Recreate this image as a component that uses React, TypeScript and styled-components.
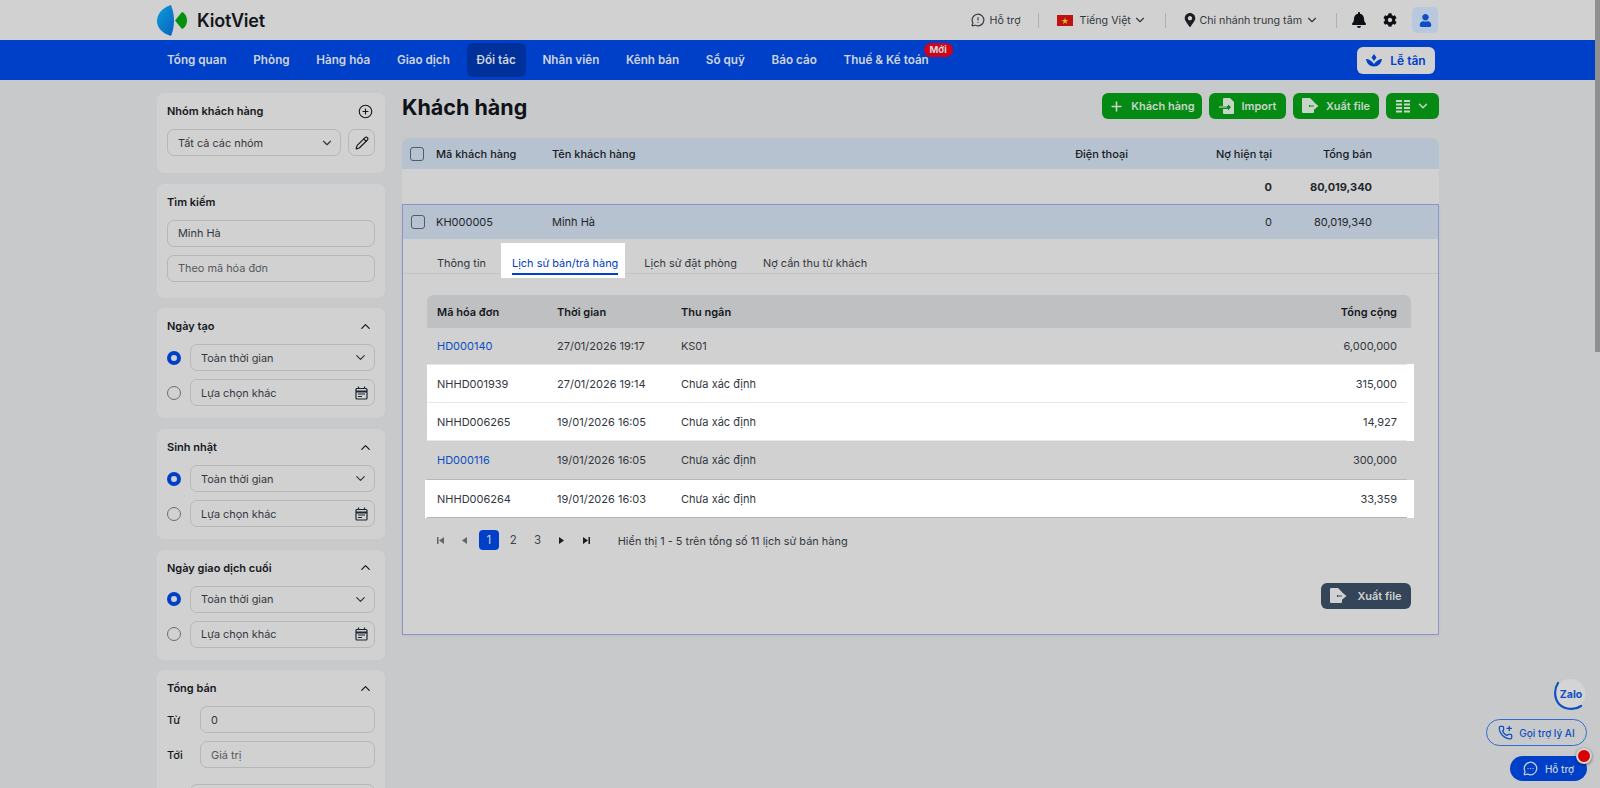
import React from "react";
import styled, { createGlobalStyle } from "styled-components";
import { ChevronDown, ChevronUp, Pencil, Plus, CirclePlus, MessageCircleWarning, MessageCircleMore } from "lucide-react";
import { FaBell, FaCog, FaUser, FaMapMarkerAlt } from "react-icons/fa";

const Global = createGlobalStyle`
  html, body { margin: 0; padding: 0; height: 100%; overflow: hidden; }
  body { font-family: Inter, "Noto Sans", sans-serif; font-size: 11px; color: #1a1d22; background: #c8c9cb; }
  * { box-sizing: border-box; }
`;
const Page = styled.div`position: relative; width: 1600px; height: 788px; overflow: hidden; background: #c8c9cb; display: flex;`;
const Column = styled.div`flex: 1; min-width: 0; display: flex; flex-direction: column;`;
const ScrollTrack = styled.div`width: 5px; background: #c9c9c9; flex: none;`;
const ScrollThumb = styled.div`width: 5px; height: 352px; background: #8f8f8f;`;
const TopBar = styled.header`height: 40px; background: #d1d1d1; padding: 0 157px; display: flex; align-items: center; justify-content: space-between;`;
const LogoWrap = styled.div`display: flex; align-items: center; gap: 10px; padding-top: 1px;`;
const LogoText = styled.span`font-size: 18px; font-weight: 600; color: #12161c; letter-spacing: -0.2px;`;
const TopRight = styled.div`display: flex; align-items: center;`;
const TopItem = styled.div`display: flex; align-items: center; gap: 4.500px; font-size: 10.700px; color: #33383f; white-space: nowrap;`;
const FlagText = styled.span`margin-left: 2.500px;`;
const TopChevron = styled(ChevronDown)`margin-left: -2px;`;
const PinIcon = styled(FaMapMarkerAlt)`margin-right: -2px;`;
const Sep = styled.div`width: 1px; height: 15px; background: #b0b0b0; margin: 0 ${p => p.$l}px 0 ${p => p.$r}px;`;
const GearWrap = styled.div`display: flex; margin-left: 16px; color: #0c0f14;`;
const Avatar = styled.div`width: 26px; height: 26px; border-radius: 5px; background: #b8c8de; display: flex; align-items: center; justify-content: center; margin-left: 15px; color: #0f4fc0;`;
const Nav = styled.nav`height: 40px; background: #0040c8; padding: 0 157px; display: flex; align-items: center;`;
const NavItem = styled.div`position: relative; height: 34px; padding: 0 10px; margin-right: 6.700px; border-radius: 6px; display: flex; align-items: center; color: #cfd4de; font-weight: 600; font-size: 11.700px; background: ${p => p.$on ? "#00309a" : "transparent"}; white-space: nowrap;`;
const NewBadge = styled.span`position: absolute; top: 0; right: -14px; height: 14px; padding: 0 6px; background: #d0021b; border-radius: 8px; color: #d8d8d8; font-size: 9.500px; font-weight: 700; line-height: 14px;`;
const Reception = styled.div`margin-left: auto; margin-right: 3px; width: 78px; height: 27px; border-radius: 6px; background: #d1d1d1; display: flex; align-items: center; justify-content: center; gap: 8px; color: #0040c8; font-weight: 600; font-size: 12px;`;
const Body = styled.div`flex: 1; min-height: 0; display: flex; gap: 17px; padding: 13px 156px 0 157px; overflow: hidden;`;
const Side = styled.aside`width: 228px; flex: none; display: flex; flex-direction: column; gap: 10.700px;`;
const Card = styled.section`background: #d1d1d1; border-radius: 7px; padding: 9px 10px ${p => p.$pb ?? 12}px; flex: none; display: flex; flex-direction: column;`;
const CardHead = styled.div`display: flex; align-items: center; justify-content: space-between; height: 18px; padding-right: 2px; font-size: 11px; font-weight: 600; color: #16191e; margin-bottom: 9px;`;
const FieldRow = styled.div`display: flex; align-items: center; gap: ${p => p.$gap ?? 7}px; margin-top: ${p => p.$mt ?? 0}px;`;
const Field = styled.div`flex: 1; height: 27px; border: 1px solid #b7b7b7; border-radius: 7px; display: flex; align-items: center; justify-content: space-between; padding: 0 6px 0 10px; font-size: 10.900px; color: ${p => p.$muted ? "#555a60" : "#33383f"}; white-space: nowrap; min-width: 0;`;
const IconBox = styled.div`width: 27px; height: 27px; flex: none; border: 1px solid #b7b7b7; border-radius: 7px; display: flex; align-items: center; justify-content: center;`;
const Radio = styled.div`width: 14px; height: 14px; border-radius: 50%; flex: none; border: ${p => p.$on ? "4.500px solid #0040c8" : "1px solid #6b6f75"}; background: #d1d1d1;`;
const FieldLabel = styled.div`width: 33px; flex: none; font-size: 11px; font-weight: 500; color: #16191e;`;
const Main = styled.main`flex: 1; min-width: 0; display: flex; flex-direction: column;`;
const TitleRow = styled.div`height: 28px; display: flex; align-items: flex-start; justify-content: space-between; margin-bottom: 17px;`;
const Title = styled.h1`margin: 0; font-size: 21.500px; line-height: 28px; font-weight: 700; color: #0f1216;`;
const Actions = styled.div`display: flex; gap: 7px;`;
const GreenBtn = styled.div`height: 26px; width: ${p => p.$w}px; background: #058a13; border-radius: 6px; display: flex; align-items: center; justify-content: center; gap: ${p => p.$gap ?? 7}px; color: #c9d5c9; font-size: 11px; font-weight: 600; white-space: nowrap;`;
const DarkBtn = styled(GreenBtn)`background: #354559; gap: 10px; color: #d1d1d1;`;
const Grid = styled.div`display: grid; grid-template-columns: 34px 116px 1fr 120px 144px 100px 67px; align-items: center; flex: none; height: ${p => p.$h}px; background: ${p => p.$bg}; border-radius: ${p => p.$r || "0"}; font-size: 11px; color: #23272d;`;
const HeadCell = styled.div`font-weight: 500; text-align: ${p => p.$right ? "right" : "left"}; color: #16191e; white-space: nowrap;`;
const Cell = styled.div`font-weight: ${p => p.$bold ? 700 : 400}; text-align: ${p => p.$right ? "right" : "left"}; white-space: nowrap;`;
const Check = styled.div`width: 14px; height: 14px; border: 1px solid #555b63; border-radius: 3px; margin-left: ${p => p.$ml ?? 8}px;`;
const Detail = styled.div`outline: 1px solid #8d95cc; outline-offset: -1px; height: 431px; background: #d1d1d1; display: flex; flex-direction: column; box-shadow: 0 1px 3px rgba(0,0,0,0.06);`;
const Tabs = styled.div`height: 35px; flex: none; border-bottom: 1px solid #c4c4c4; display: flex; align-items: flex-start; padding-left: 22px;`;
const Tab = styled.div`position: relative; padding: 16.500px 13px 0; line-height: 14px; font-size: 10.950px; color: #33383f; white-space: nowrap;`;
const ActiveTab = styled(Tab)`margin: 4px 6px 0 2px; height: 35px; padding: 12.500px 7px 0 11px; color: #0040c8; background: #fff;
  &::after { content: ""; position: absolute; left: 11px; right: 7px; bottom: 3px; height: 2px; background: #0040d8; }`;
const DetailInner = styled.div`flex: 1; padding: 21px 28px 0 25px; display: flex; flex-direction: column;`;
const InvGrid = styled.div`display: grid; grid-template-columns: 120px 124px 1fr 200px; align-items: center; padding: 0 14px 0 10px; height: ${p => p.$h ?? 37}px; font-size: 11px; color: #33383f;`;
const InvHeadRow = styled(InvGrid)`background: #bfc0c2; border-radius: 7px 7px 0 0;`;
const InvHead = styled.div`font-weight: 600; color: #16191e; text-align: ${p => p.$right ? "right" : "left"};`;
const InvCell = styled.div`text-align: ${p => p.$right ? "right" : "left"}; color: ${p => p.$link ? "#0f4fc0" : "inherit"}; white-space: nowrap;`;
const Divider = styled.div`height: 1px; background: ${p => p.$c}; margin-right: 4px;`;
const WhiteWrap = styled.div`background: #fff; margin: 0 -3px 0 ${p => -p.$l}px; padding: 0 3px 0 ${p => p.$l}px;`;
const Pager = styled.div`display: flex; align-items: center; margin-top: 12px; padding-left: 3px;`;
const PageBtn = styled.div`width: 20px; height: 20px; margin-right: 4.400px; border-radius: 4px; display: flex; align-items: center; justify-content: center; font-size: 11.500px; color: ${p => p.$on ? "#d1d1d1" : "#3f444b"}; background: ${p => p.$on ? "#0040c8" : "transparent"};`;
const PageArrow = styled(PageBtn)`color: ${p => p.$dim ? "#62666b" : "#1a1d22"};`;
const PagerText = styled.div`margin-left: 17px; padding-top: 2px; font-size: 10.950px; color: #33383f; white-space: nowrap;`;
const ExportRow = styled.div`display: flex; justify-content: flex-end; margin-top: 33px;`;
const Floats = styled.div`position: absolute; right: 13px; bottom: 7px; display: flex; flex-direction: column; align-items: flex-end;`;
const Zalo = styled.div`position: relative; width: 32px; height: 33px; margin: 0 1px 8px 0; color: #0f4fc0; font-size: 10.500px; font-weight: 700; display: flex; align-items: center; justify-content: center;`;
const ZaloRing = styled.svg`position: absolute; inset: 0;`;
const ZaloText = styled.span`position: relative; margin-left: 2px;`;
const AiBtn = styled.div`height: 27px; width: 101px; border: 1px solid #2f6bd0; border-radius: 14px; display: flex; align-items: center; justify-content: center; gap: 6px; color: #0f4fc0; font-size: 10px; font-weight: 500; margin-bottom: 10px;`;
const SupportBtn = styled.div`position: relative; height: 25px; width: 77px; background: #0040c8; border-radius: 13px; display: flex; align-items: center; justify-content: center; gap: 7px; color: #c9d0dc; font-size: 10px; font-weight: 500;`;
const Dot = styled.div`position: absolute; right: -5px; top: -8px; width: 16px; height: 16px; border-radius: 50%; background: #d80000; border: 2px solid #d1d1d1; box-shadow: 0 1px 3px rgba(0,0,0,.5);`;

const Logo = () => (
  <svg width="30" height="31" viewBox="0 0 30 31">
    <defs><linearGradient id="lg" x1="0" x2="1" y1="0" y2="1"><stop offset="0" stopColor="#0aa0d8" /><stop offset="1" stopColor="#0a5fc0" /></linearGradient></defs>
    <path d="M14 0 C5 3 0 9 0 16 C0 23 5 28 14 31 C16 26 17 21 17 16 C17 10 16 5 14 0Z" fill="url(#lg)" />
    <path d="M18 15.500 L25 7 C28 8 30 12 30 15.500 C30 19 28 23 25 24 Z" fill="#069010" />
  </svg>
);
const ExportIcon = ({ c = "#c9d5c9" }: { c?: string }) => (
  <svg width="17" height="16" viewBox="0 0 17 16"><path d="M1 0h7l4 4v3H7v2h5v5a1 1 0 0 1-1 1H1a1 1 0 0 1-1-1V1a1 1 0 0 1 1-1Z" fill={c} /><path d="M8 8h6M12.500 5.500 15.500 8l-3 2.500Z" stroke={c} strokeWidth="1.200" fill={c} /></svg>
);
const ImportIcon = () => (
  <svg width="16" height="16" viewBox="0 0 16 16"><path d="M5 0h6l4 4v11a1 1 0 0 1-1 1H5a1 1 0 0 1-1-1v-4h5v1.500L12 9 9 6.500V8H4V1a1 1 0 0 1 1-1Z" fill="#c9d5c9" /><path d="M0 9h8" stroke="#c9d5c9" strokeWidth="1.200" /></svg>
);
const ColumnsIcon = () => (
  <svg width="14" height="13" viewBox="0 0 14 13" fill="#c9d5c9"><rect width="6" height="2" /><rect x="8" width="6" height="2" /><rect y="3.500" width="6" height="2" /><rect x="8" y="3.500" width="6" height="2" /><rect y="7" width="6" height="2" /><rect x="8" y="7" width="6" height="2" /><rect y="10.500" width="6" height="2" /><rect x="8" y="10.500" width="6" height="2" /></svg>
);
const Flag = () => (
  <svg width="16" height="11" viewBox="0 0 16 11"><rect width="16" height="11" fill="#c01010" /><path d="M8 2.500 8.800 5h2.500l-2 1.500.8 2.400L8 7.400 5.900 8.900l.8-2.400-2-1.500h2.500Z" fill="#d8c020" /></svg>
);
const Lotus = () => (
  <svg width="16" height="13" viewBox="0 0 16 13" fill="#0040c8"><path d="M8 0 10.500 3.500 8 7 5.500 3.500Z" /><path d="M0 5c3 0 6 2 8 5 2-3 5-5 8-5-.5 4-3.500 7.500-8 7.500S.5 9 0 5Z" /></svg>
);
const Pg = ({ d }: { d: string }) => (<svg width="9" height="9" viewBox="0 0 9 9" fill="currentColor"><path d={d} /></svg>);
const Cal = () => (
  <svg width="13" height="14" viewBox="0 0 13 14" fill="none" stroke="#1d2630" strokeWidth="1.200"><rect x="1" y="2.500" width="11" height="10.500" rx="1" /><path d="M1 5.500h11" strokeWidth="2" /><path d="M3.500 0.500v2.500M9.500 0.500v2.500" /><path d="M3 8h7M3 10.500h4" strokeWidth="1" /></svg>
);
const AiPhone = () => (
  <svg width="15" height="15" viewBox="0 0 24 24" fill="none" stroke="currentColor" strokeWidth="2" strokeLinecap="round" strokeLinejoin="round">
    <path d="M13.832 16.568a1 1 0 0 0 1.213-.303l.355-.465A2 2 0 0 1 17 15h3a2 2 0 0 1 2 2v3a2 2 0 0 1-2 2A18 18 0 0 1 2 4a2 2 0 0 1 2-2h3a2 2 0 0 1 2 2v3a2 2 0 0 1-.8 1.600l-.468.351a1 1 0 0 0-.292 1.233 14 14 0 0 0 6.392 6.384" />
    <path d="M18 2v7M14.500 5.500h7" />
  </svg>
);

const Dated = ({ title }: { title: string }) => (
  <Card>
    <CardHead>{title}<ChevronUp size={15} strokeWidth={2} /></CardHead>
    <FieldRow $gap={9}><Radio $on /><Field>Toàn thời gian<ChevronDown size={15} /></Field></FieldRow>
    <FieldRow $gap={9} $mt={8}><Radio /><Field>Lựa chọn khác<Cal /></Field></FieldRow>
  </Card>
);

const navs = ["Tổng quan", "Phòng", "Hàng hóa", "Giao dịch", "Đối tác", "Nhân viên", "Kênh bán", "Sổ quỹ", "Báo cáo"];

const Inv = ({ a, b, c, d, link, h }: any) => (
  <InvGrid $h={h}>
    <InvCell $link={link}>{a}</InvCell><InvCell>{b}</InvCell><InvCell>{c}</InvCell><InvCell $right>{d}</InvCell>
  </InvGrid>
);

export default function App() {
  return (
    <Page>
      <Global />
      <Column>
        <TopBar>
          <LogoWrap><Logo /><LogoText>KiotViet</LogoText></LogoWrap>
          <TopRight>
            <TopItem><MessageCircleWarning size={14} />Hỗ trợ</TopItem>
            <Sep $r={17} $l={18} />
            <TopItem><Flag /><FlagText>Tiếng Việt</FlagText><TopChevron size={14} /></TopItem>
            <Sep $r={17.500} $l={17} />
            <TopItem><PinIcon size={14} color="#1a1d22" />Chi nhánh trung tâm<TopChevron size={14} /></TopItem>
            <Sep $r={17.500} $l={14} />
            <FaBell size={16} color="#0c0f14" />
            <GearWrap><FaCog size={14} /></GearWrap>
            <Avatar><FaUser size={13} /></Avatar>
          </TopRight>
        </TopBar>
        <Nav>
          {navs.map(n => <NavItem key={n} $on={n === "Đối tác"}>{n}</NavItem>)}
          <NavItem>Thuế &amp; Kế toán<NewBadge>Mới</NewBadge></NavItem>
          <Reception><Lotus />Lễ tân</Reception>
        </Nav>
        <Body>
          <Side>
            <Card $pb={17}>
              <CardHead>Nhóm khách hàng<CirclePlus size={15} strokeWidth={1.800} /></CardHead>
              <FieldRow><Field>Tất cả các nhóm<ChevronDown size={14} /></Field><IconBox><Pencil size={14} /></IconBox></FieldRow>
            </Card>
            <Card $pb={16}>
              <CardHead>Tìm kiếm</CardHead>
              <FieldRow><Field>Minh Hà</Field></FieldRow>
              <FieldRow $mt={8}><Field $muted>Theo mã hóa đơn</Field></FieldRow>
            </Card>
            <Dated title="Ngày tạo" />
            <Dated title="Sinh nhật" />
            <Dated title="Ngày giao dịch cuối" />
            <Card>
              <CardHead>Tổng bán<ChevronUp size={15} /></CardHead>
              <FieldRow $gap={0}><FieldLabel>Từ</FieldLabel><Field>0</Field></FieldRow>
              <FieldRow $gap={0} $mt={8}><FieldLabel>Tới</FieldLabel><Field $muted>Giá trị</Field></FieldRow>
              <FieldRow $gap={9} $mt={16}><Radio /><Field /></FieldRow>
            </Card>
          </Side>
          <Main>
            <TitleRow>
              <Title>Khách hàng</Title>
              <Actions>
                <GreenBtn $w={100}><Plus size={15} strokeWidth={2.500} />Khách hàng</GreenBtn>
                <GreenBtn $w={77}><ImportIcon />Import</GreenBtn>
                <GreenBtn $w={86}><ExportIcon />Xuất file</GreenBtn>
                <GreenBtn $w={53} $gap={6}><ColumnsIcon /><ChevronDown size={14} strokeWidth={2.500} /></GreenBtn>
              </Actions>
            </TitleRow>
            <Grid $h={31} $bg="#b6c2d0" $r="7px 7px 0 0">
              <Check /><HeadCell>Mã khách hàng</HeadCell><HeadCell>Tên khách hàng</HeadCell>
              <HeadCell $right>Điện thoại</HeadCell><HeadCell $right>Nợ hiện tại</HeadCell><HeadCell $right>Tổng bán</HeadCell><span />
            </Grid>
            <Grid $h={35} $bg="#d1d1d1">
              <span /><span /><span /><span /><Cell $right $bold>0</Cell><Cell $right $bold>80,019,340</Cell><span />
            </Grid>
            <Detail>
              <Grid $h={35} $bg="#b6c2d0">
                <Check $ml={9} /><Cell>KH000005</Cell><Cell>Minh Hà</Cell><span /><Cell $right>0</Cell><Cell $right>80,019,340</Cell><span />
              </Grid>
              <Tabs>
                <Tab>Thông tin</Tab>
                <ActiveTab>Lịch sử bán/trả hàng</ActiveTab>
                <Tab>Lịch sử đặt phòng</Tab>
                <Tab>Nợ cần thu từ khách</Tab>
              </Tabs>
              <DetailInner>
                <InvHeadRow $h={33}>
                  <InvHead>Mã hóa đơn</InvHead><InvHead>Thời gian</InvHead><InvHead>Thu ngân</InvHead><InvHead $right>Tổng cộng</InvHead>
                </InvHeadRow>
                <Inv a="HD000140" b="27/01/2026 19:17" c="KS01" d="6,000,000" link h={36} />
                <WhiteWrap $l={0}>
                  <Divider $c="#e8e8e8" />
                  <Inv a="NHHD001939" b="27/01/2026 19:14" c="Chưa xác định" d="315,000" />
                  <Divider $c="#e8e8e8" />
                  <Inv a="NHHD006265" b="19/01/2026 16:05" c="Chưa xác định" d="14,927" />
                  <Divider $c="#e8e8e8" />
                </WhiteWrap>
                <Inv a="HD000116" b="19/01/2026 16:05" c="Chưa xác định" d="300,000" link h={38} />
                <Divider $c="#b8b8b8" />
                <WhiteWrap $l={2}>
                  <Inv a="NHHD006264" b="19/01/2026 16:03" c="Chưa xác định" d="33,359" />
                  <Divider $c="#b5b5b5" />
                </WhiteWrap>
                <Pager>
                  <PageArrow $dim><Pg d="M1 1h1.500v7H1ZM8 1v7L3 4.500Z" /></PageArrow>
                  <PageArrow $dim><Pg d="M7 1v7L2 4.500Z" /></PageArrow>
                  <PageBtn $on>1</PageBtn>
                  <PageBtn>2</PageBtn>
                  <PageBtn>3</PageBtn>
                  <PageArrow><Pg d="M2 1v7l5-3.500Z" /></PageArrow>
                  <PageArrow><Pg d="M1 1v7l5-3.500ZM6.500 1H8v7H6.500Z" /></PageArrow>
                  <PagerText>Hiển thị 1 - 5 trên tổng số 11 lịch sử bán hàng</PagerText>
                </Pager>
                <ExportRow><DarkBtn $w={90}><ExportIcon c="#d1d1d1" />Xuất file</DarkBtn></ExportRow>
              </DetailInner>
            </Detail>
          </Main>
        </Body>
      </Column>
      <ScrollTrack><ScrollThumb /></ScrollTrack>
      <Floats>
        <Zalo>
          <ZaloRing width="32" height="33" viewBox="0 0 32 33" fill="none">
            <circle cx="16.500" cy="16" r="15" fill="#d4d4d6" />
            <path d="M4 5 C0 11 0 20 5 26 C10 31 20 33 27 28" stroke="#0f4fc0" strokeWidth="2.200" strokeLinecap="round" fill="none" />
          </ZaloRing>
          <ZaloText>Zalo</ZaloText>
        </Zalo>
        <AiBtn><AiPhone />Gọi trợ lý AI</AiBtn>
        <SupportBtn><MessageCircleMore size={15} />Hỗ trợ<Dot /></SupportBtn>
      </Floats>
    </Page>
  );
}
